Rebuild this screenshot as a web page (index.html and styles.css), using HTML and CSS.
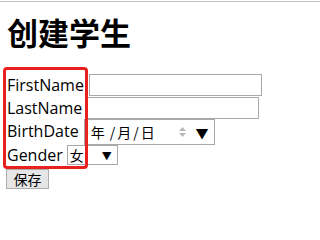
FILE: index.html
```html
<!DOCTYPE html>
<html>
<head>
<meta charset="utf-8">
<link rel="stylesheet" href="styles.css">
</head>
<body>
<div class="page">
  <h1 class="title">创建学生</h1>
  <form class="form">
    <div class="row r1"><label class="lbl">FirstName</label><input class="txt txt-a" type="text"></div>
    <div class="row r2"><label class="lbl">LastName</label><input class="txt txt-b" type="text"></div>
    <div class="row r3"><label class="lbl">BirthDate</label><span class="date"><span class="date-text"><span class="dp">年</span><span class="dp sl first">/</span><span class="dp">月</span><span class="dp sl">/</span><span class="dp">日</span></span><span class="spin"><svg width="9" height="14" viewBox="0 0 9 14"><path d="M1 6 L4.5 2 L8 6 Z M1 8 L4.5 12 L8 8 Z" fill="#b8b8b8"/></svg></span><span class="caret">▼</span></span></div>
    <div class="row r4"><label class="lbl">Gender</label><span class="sel"><span class="sel-text">女</span><span class="caret">▼</span></span></div>
    <div class="row r5"><button class="btn" type="button">保存</button></div>
    <div class="mark"></div>
  </form>
</div>
</body>
</html>
```
FILE: styles.css
```css
html, body { margin: 0; padding: 0; background: #fff; }
.page {
  border-top: 1px solid #c4c4c4;
  margin-top: 1px;
  padding: 0 7px;
  font-family: "Open Sans", "Noto Sans CJK SC", sans-serif;
  color: #000;
}
.title {
  margin: 12px 0 0 0;
  height: 60px;
  font-size: 31px;
  line-height: 36px;
  font-weight: bold;
  font-family: "Noto Sans CJK SC", sans-serif;
}
.form { position: relative; }
.row {
  display: flex;
  align-items: flex-start;
  font-size: 16px;
}
.r1 { height: 23px; }
.r2 { height: 22px; }
.r3 { height: 26px; }
.r4 { height: 21px; }
.r5 { height: 23px; align-items: flex-end; }
.lbl { font-size: 16px; line-height: 22px; }
.r4 .lbl { line-height: 20px; }
.r3 .lbl { line-height: 24px; }
.txt {
  box-sizing: border-box;
  height: 22px;
  border: 1px solid #a9a9a9;
  padding: 0;
  margin-left: 5px;
}
.txt-a { width: 173px; }
.txt-b { width: 172px; }
.date {
  box-sizing: border-box;
  margin-left: 5px;
  width: 131px;
  height: 26px;
  border: 1px solid #a9a9a9;
  display: flex;
  align-items: center;
  font-size: 14px;
  font-family: "Noto Sans CJK SC", sans-serif;
}
.date-text { padding-left: 6px; flex: 1; display: flex; align-items: center; }
.dp { font-size: 14px; }
.sl { margin: 0 2px; }
.sl.first { margin-left: 5px; }
.spin { display: flex; align-items: center; margin-right: 9px; }
.caret { font-size: 13px; margin-right: 5px; }
.sel {
  box-sizing: border-box;
  margin-left: 4px;
  width: 51px;
  height: 20px;
  border: 1px solid #a9a9a9;
  display: flex;
  align-items: center;
  font-size: 14px;
  font-family: "Noto Sans CJK SC", sans-serif;
}
.sel-text { flex: 1; padding-left: 2px; }
.sel .caret { font-size: 10px; margin-right: 5px; }
.btn {
  box-sizing: border-box;
  margin: 0 0 0 -1px;
  width: 43px;
  height: 20px;
  padding: 0;
  border: 1px solid #adadad;
  background: #e6e6e6;
  font-size: 14px;
  font-family: "Noto Sans CJK SC", sans-serif;
  line-height: 18px;
}
.mark {
  position: absolute;
  left: -4px;
  top: -7px;
  width: 79px;
  height: 96px;
  border: 3px solid #e8201e;
  border-radius: 4px;
}
```
